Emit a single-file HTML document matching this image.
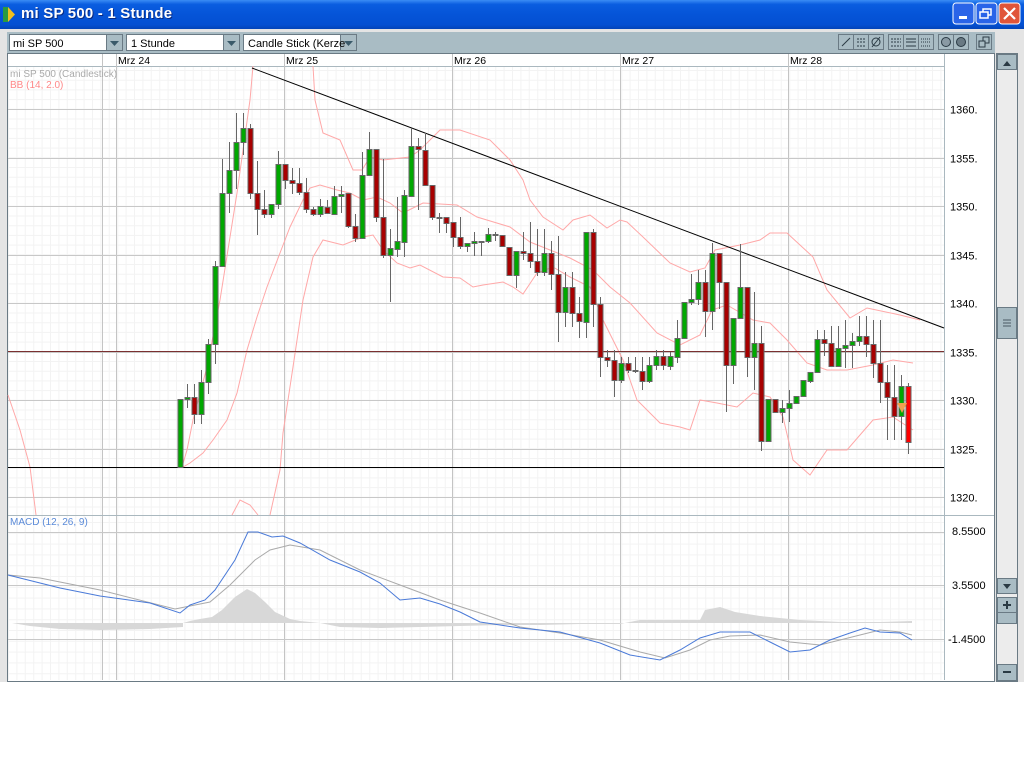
<!DOCTYPE html>
<html><head><meta charset="utf-8">
<style>
body{margin:0;width:1024px;height:768px;overflow:hidden;background:#fff;font-family:"Liberation Sans",sans-serif;position:relative}
#tb{position:absolute;left:0;top:0;width:1024px;height:29px;background:linear-gradient(#3a8cf5 0%,#0a5de0 15%,#0554d8 50%,#0450d2 85%,#0344b8 100%)}
#tb .t{position:absolute;left:21px;top:5px;color:#fff;font-size:15px;font-weight:bold;letter-spacing:0.2px;text-shadow:1px 1px #0a2a80}
</style></head><body>
<div id="tb"><div class="t">mi SP 500 - 1 Stunde</div>
<svg style="position:absolute;left:0;top:0" width="1024" height="29">
<rect x="3" y="7" width="5" height="15" fill="#2a9a40"/><polygon points="8,7 15,14.5 8,22" fill="#f0c020"/>
<g><rect x="953" y="3" width="21" height="21" rx="3" fill="#2a64e8" stroke="#fff"/><rect x="959" y="16" width="8" height="3" fill="#fff"/></g>
<g><rect x="976" y="3" width="21" height="21" rx="3" fill="#2a64e8" stroke="#fff"/><rect x="983" y="9" width="8" height="6" fill="none" stroke="#fff" stroke-width="1.5"/><rect x="980" y="12" width="8" height="6" fill="#2a64e8" stroke="#fff" stroke-width="1.5"/></g>
<g><rect x="999" y="3" width="21" height="21" rx="3" fill="#e0553a" stroke="#fff"/><path d="M1004 8 L1015 19 M1015 8 L1004 19" stroke="#fff" stroke-width="2.2"/></g>
</svg></div>
<svg id="s" style="position:absolute;left:0;top:29px" width="1024" height="739" viewBox="0 29 1024 739" font-family="Liberation Sans, sans-serif">
<rect x="0" y="29" width="1024" height="653" fill="#e4e4e4"/>
<rect x="7" y="32" width="988" height="21" fill="#a9bcc4"/>
<g font-size="11" fill="#000">
<rect x="9.5" y="34.5" width="113" height="16" fill="#fff" stroke="#6a7a84"/><rect x="106.5" y="34.5" width="16" height="16" fill="#a9bcc4" stroke="#6a7a84"/><polygon points="110,41 119,41 114.5,46" fill="#3a5a6a"/><text x="13" y="47">mi SP 500</text>
<rect x="126.5" y="34.5" width="113" height="16" fill="#fff" stroke="#6a7a84"/><rect x="223.5" y="34.5" width="16" height="16" fill="#a9bcc4" stroke="#6a7a84"/><polygon points="227,41 236,41 231.5,46" fill="#3a5a6a"/><text x="131" y="47">1 Stunde</text>
<rect x="243.5" y="34.5" width="113" height="16" fill="#fff" stroke="#6a7a84"/><rect x="340.5" y="34.5" width="16" height="16" fill="#a9bcc4" stroke="#6a7a84"/><polygon points="344,41 353,41 348.5,46" fill="#3a5a6a"/><text x="248" y="47">Candle Stick (Kerze</text>
</g>
<g stroke="#6a7a84" fill="#a9bcc4">
<rect x="838.5" y="34.5" width="15" height="15"/><rect x="853.5" y="34.5" width="15" height="15"/><rect x="868.5" y="34.5" width="15" height="15"/>
<rect x="888.5" y="34.5" width="15" height="15"/><rect x="903.5" y="34.5" width="15" height="15"/><rect x="918.5" y="34.5" width="15" height="15"/>
<rect x="938.5" y="34.5" width="15" height="15"/><rect x="953.5" y="34.5" width="15" height="15"/><rect x="976.5" y="34.5" width="15" height="15"/>
</g>
<g stroke="#2a3a44" fill="none" stroke-width="1">
<path d="M842 46 L850 38"/><path d="M857 39h9M857 42h9M857 46h9" stroke-dasharray="2,1"/><circle cx="876" cy="42" r="4"/><path d="M872 47 L880 37"/>
<path d="M891 39h10M891 42h10M891 46h10" stroke-dasharray="2,1"/><path d="M906 39h10M906 42h10M906 46h10"/><path d="M921 39h10M921 42h10M921 46h10" stroke-dasharray="1,1"/>
<circle cx="946" cy="42" r="4.5" fill="#8a9aa4"/><circle cx="961" cy="42" r="4.5" fill="#6a7a84"/>
<rect x="983" y="37" width="6" height="6" fill="#a9bcc4"/><rect x="979" y="41" width="6" height="6" fill="#a9bcc4"/>
</g>
<rect x="7.5" y="53.5" width="987" height="628" fill="#fff" stroke="#6a7a84"/>
<g id="fine" stroke="#f3f3f3" stroke-width="1"></g>
<rect x="8" y="54" width="936" height="12" fill="#fff"/>
<line x1="8" y1="66.5" x2="944" y2="66.5" stroke="#aab8bf"/>
<g stroke="#c4c4c4"><line x1="102.5" y1="54" x2="102.5" y2="680"/><line x1="116.5" y1="54" x2="116.5" y2="680"/><line x1="284.5" y1="54" x2="284.5" y2="680"/><line x1="452.5" y1="54" x2="452.5" y2="680"/><line x1="620.5" y1="54" x2="620.5" y2="680"/><line x1="788.5" y1="54" x2="788.5" y2="680"/></g>
<g font-size="10.5" fill="#000"><text x="118" y="64">Mrz 24</text><text x="286" y="64">Mrz 25</text><text x="454" y="64">Mrz 26</text><text x="622" y="64">Mrz 27</text><text x="790" y="64">Mrz 28</text></g>
<g id="hg" stroke="#c8c8c8"></g>
<line x1="944.5" y1="54" x2="944.5" y2="680" stroke="#aab8bf"/>
<line x1="8" y1="515.5" x2="994" y2="515.5" stroke="#aab8bf"/>
<g font-size="11" fill="#000" id="pl"></g>
<g font-size="11" fill="#000"><text x="952" y="535">8.5500</text><text x="952" y="589">3.5500</text><text x="948" y="643">-1.4500</text></g>
<g font-size="10" ><text x="10" y="77" fill="#aaa">mi SP 500 (Candlestick)</text><text x="10" y="88" fill="#f88">BB (14, 2.0)</text><text x="10" y="525" fill="#5a8ad8">MACD (12, 26, 9)</text></g>
<g fill="none" stroke="#ffa8a8" stroke-width="1">
<polyline points="8,395 20,430 30,467 36,515"/>
<polyline points="182,467 187,450 193,420 207,367 220,300 237,193 250,100 253,66"/>
<polyline points="313,66 315,100 323,133 340,140 353,170 362,170 370,157 383,160 410,157 420,150 440,130 460,130 490,140 510,160 523,180 530,200 543,217 563,230 573,220 590,215 607,228 620,220 627,222 643,237 670,263 690,272 705,268 715,250 740,245 760,240 770,233 787,233 813,257 827,290 850,318 867,308 900,315 920,320"/>
<polyline points="183,467 190,463 203,453 213,440 227,420 237,393 247,350 257,317 267,287 280,253 290,227 303,200 310,188 320,185 337,190 350,193 363,200 377,197 390,203 403,213 423,203 457,205 477,217 510,227 530,242 550,250 570,258 593,270 610,287 630,303 657,333 680,345 700,335 712,310 727,305 753,320 770,323 787,340 807,363 827,370 847,370 873,365 893,360 913,363"/>
<polyline points="270,515 280,470 283,433 293,367 303,300 313,257 323,240 343,245 363,237 373,235 383,250 397,263 410,268 420,265 443,277 460,278 473,287 483,285 503,282 513,287 523,294 537,273 553,267 570,277 590,287 603,320 623,360 637,400 660,423 680,427 690,430 700,400 717,403 737,407 753,393 770,397 783,417 793,460 810,475 827,450 847,450 873,420 893,417 913,430"/>
<polyline points="232,515 240,500 250,505 258,515"/>
</g>
<line x1="8" y1="351.5" x2="944" y2="351.5" stroke="#7a3030"/>
<line x1="8" y1="467.5" x2="944" y2="467.5" stroke="#000"/>
<line x1="252" y1="68" x2="944" y2="328" stroke="#000"/>
<g id="cd"></g>
<polygon points="897,403 907,403 902,413" fill="#f0a050"/>
<polygon fill="#d8d8d8" points="12,623 30,626 60,629 100,630 150,629 183,627 183,623 190,621 200,619 212,617 222,610 235,597 247,589 255,593 265,602 275,612 290,619 300,621 320,623 340,627 380,628 420,627 460,626 500,625 540,625 580,624 620,624 640,620 700,620 705,610 720,607 735,612 760,616 800,620 840,622 880,622 912,621 912,623"/>
<polyline fill="none" stroke="#aaa" points="8,575 40,578 100,590 175,609 210,602 230,585 255,560 270,550 290,545 320,550 360,570 400,585 440,600 480,613 520,627 560,633 600,640 640,652 665,658 690,650 710,640 730,636 760,635 790,642 820,645 860,635 880,630 900,632 912,635"/>
<polyline fill="none" stroke="#4a7ad8" points="8,575 60,588 100,596 150,603 180,613 190,605 205,600 215,590 235,560 248,532 258,532 272,537 283,536 300,543 330,560 360,572 380,583 400,600 420,598 440,604 460,612 480,622 500,625 520,628 560,632 600,643 630,655 660,660 680,650 700,638 720,632 750,632 770,642 790,652 810,650 830,640 850,633 865,628 880,632 900,633 912,640"/>
<rect x="996.5" y="53.5" width="21" height="628" fill="#ececec" stroke="#6a7a84"/>
<rect x="997.5" y="54.5" width="19" height="15" fill="#a9bcc4" stroke="#6a7a84"/><polygon points="1003,66 1011,66 1007,61" fill="#2a3a44"/>
<rect x="997.5" y="307.5" width="19" height="31" fill="#a9bcc4" stroke="#6a7a84"/><path d="M1003 320h8M1003 323h8M1003 326h8" stroke="#4a5a64"/>
<rect x="997.5" y="578.5" width="19" height="15" fill="#a9bcc4" stroke="#6a7a84"/><polygon points="1003,584 1011,584 1007,589" fill="#2a3a44"/>
<rect x="997.5" y="597.5" width="19" height="15" fill="#a9bcc4" stroke="#6a7a84"/><path d="M1003 605h8M1007 601v8" stroke="#2a3a44" stroke-width="2"/>
<rect x="997.5" y="612.5" width="19" height="11" fill="#a9bcc4" stroke="#6a7a84"/>
<rect x="997.5" y="664.5" width="19" height="16" fill="#a9bcc4" stroke="#6a7a84"/><path d="M1003 672h8" stroke="#2a3a44" stroke-width="2"/>
<rect x="0" y="682" width="1024" height="86" fill="#fff"/>
</svg>
<script>
var NS="http://www.w3.org/2000/svg";
function el(p,t,a){var e=document.createElementNS(NS,t);for(var k in a)e.setAttribute(k,a[k]);p.appendChild(e);return e;}
var fine=document.getElementById('fine');
for(var x=8.5;x<944;x+=8.4)el(fine,'line',{x1:x,y1:67,x2:x,y2:680});
for(var y=70.5;y<515;y+=9.7)el(fine,'line',{x1:8,y1:y,x2:944,y2:y});
for(var y=522.5;y<680;y+=10.8)el(fine,'line',{x1:8,y1:y,x2:944,y2:y});
var hg=document.getElementById('hg'),pl=document.getElementById('pl');
for(var p=1360;p>=1320;p-=5){var yy=Math.round(109+(1360-p)*9.7)+0.5;el(hg,'line',{x1:8,y1:yy,x2:944,y2:yy});var t=el(pl,'text',{x:950,y:yy+4});t.textContent=p+'.';}
[532.5,585.5,639.5].forEach(function(yy){el(hg,'line',{x1:8,y1:yy,x2:944,y2:yy});});
var D=[
['G',399,467,399,467],['G',397,399,384,408],['R',397,414,384,424],['G',382,414,370,424],['G',344,382,339,394],['G',266,344,261,364],['G',193,266,159,266],['G',170,193,142,213],['G',142,170,113,189],['G',128,142,113,155],
['R',128,193,124,199],['R',193,209,161,235],['R',209,214,190,218],['G',204,214,204,218],['G',164,204,151,209],['R',164,180,164,189],['R',180,183,168,194],['R',183,192,168,195],['R',192,209,178,213],['R',209,214,207,216],
['G',206,214,199,217],['R',207,213,200,214],['G',196,214,186,214],['G',194,196,186,213],['R',193,226,193,228],['R',226,238,214,242],['G',175,238,152,238],['G',149,175,132,176],['R',149,217,149,222],['R',217,255,159,258],
['G',248,255,229,302],['G',241,249,197,257],['G',195,242,190,257],['G',146,196,128,196],['R',146,149,138,210],['R',150,185,133,186],['R',185,217,185,220],['D',217,217,213,233],['R',217,223,217,233],['R',222,237,222,247],
['R',237,246,217,249],['G',243,246,243,252],['G',241,243,232,256],['D',241,241,241,256],['G',234,241,228,243],['D',234,234,232,241],['R',235,246,235,246],['R',247,275,247,275],['G',251,275,251,288],['R',251,253,232,260],
['R',253,261,222,268],['R',261,272,229,276],['G',253,272,229,276],['R',253,274,241,290],['R',274,312,236,342],['G',287,312,272,327],['R',287,313,272,327],['R',313,321,297,338],['G',232,322,232,338],['R',232,304,229,327],
['R',304,357,297,377],['R',357,360,350,367],['R',360,380,350,397],['G',363,380,357,383],['R',363,370,357,373],['D',370,370,357,373],['R',371,381,357,390],['G',365,381,357,383],['G',356,365,350,370],['R',356,365,350,370],
['G',356,366,352,370],['G',338,357,320,363],['G',302,338,302,338],['G',299,302,274,305],['G',282,299,270,305],['R',282,311,270,337],['G',253,311,243,330],['R',253,282,253,309],['R',282,365,282,412],['G',318,365,318,384],
['G',287,318,244,318],['R',287,357,287,377],['G',343,357,292,390],['R',343,441,326,451],['G',399,441,399,441],['R',399,412,399,412],['G',408,412,400,423],['G',403,408,390,422],['G',396,403,396,403],['G',380,396,380,396],
['G',372,381,372,383],['G',339,372,330,372],['R',339,343,330,356],['R',343,366,326,366],['G',348,366,326,366],['G',345,348,320,368],['G',341,345,333,368],['G',336,341,316,346],['R',336,344,316,357],['R',344,363,320,378],
['R',363,382,320,403],['R',382,397,365,440],['R',397,416,365,440],['G',386,416,375,440],['X',386,442,383,454]];
var cd=document.getElementById('cd');
D.forEach(function(c,i){var x=180+7*i;
el(cd,'line',{x1:x+0.5,y1:c[3],x2:x+0.5,y2:c[4],stroke:'#666'});
var f=c[0]=='G'?'#00a800':c[0]=='R'?'#a80000':c[0]=='X'?'#ff0000':'#888';
var h=Math.max(c[2]-c[1],1);
el(cd,'rect',{x:x-2,y:c[1]+0.5,width:5,height:h,fill:f,stroke:'#666'});});
</script>
</body></html>
